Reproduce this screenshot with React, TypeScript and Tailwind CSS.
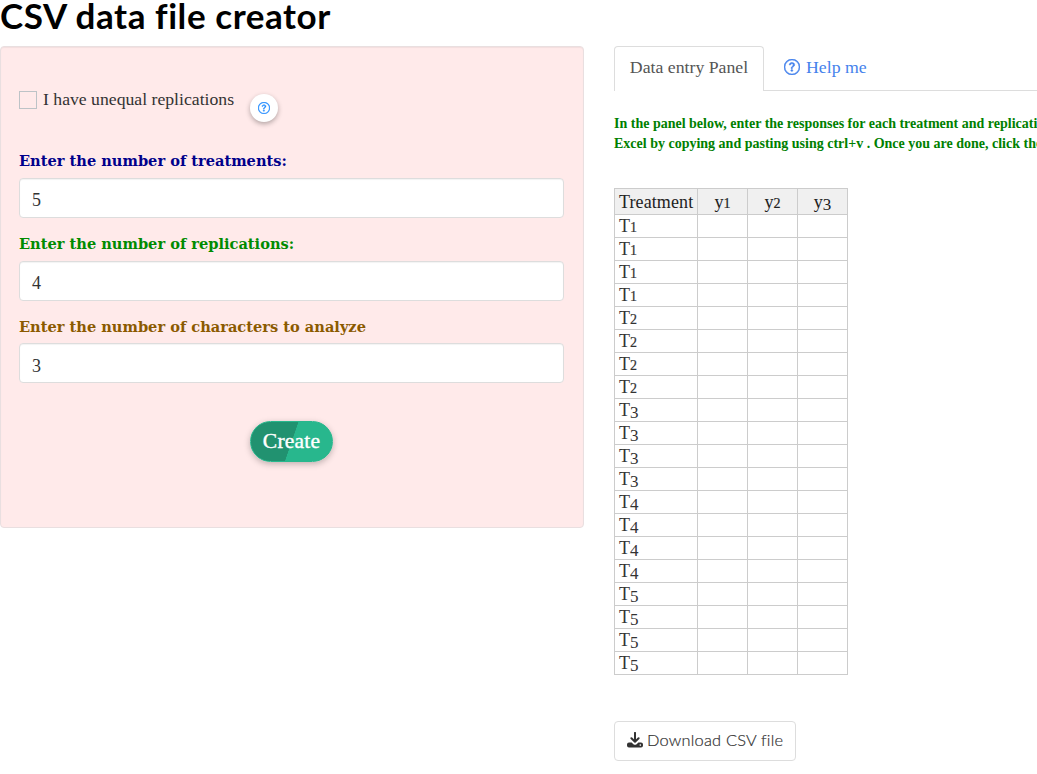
import { BsQuestionCircle } from "react-icons/bs";

const SERIF = "font-['Liberation_Serif',serif]";

const fields = [
  { label: "Enter the number of treatments:", value: "5", color: "text-[#00008b]", gap: "h-[28px]", pad: "pt-[4px]" },
  { label: "Enter the number of replications:", value: "4", color: "text-[#008b00]", gap: "h-[28px]", pad: "pt-[4px]" },
  { label: "Enter the number of characters to analyze", value: "3", color: "text-[#8b5a00]", gap: "h-[27px]", pad: "pt-[6px]" },
];

const treatments = ["T1", "T2", "T3", "T4", "T5"];
const rows = treatments.flatMap((t) => [t, t, t, t]);
const columns = ["y1", "y2", "y3"];

function DownloadIcon() {
  return (
    <svg viewBox="0 0 16 16" className="h-4 w-4 shrink-0" aria-hidden="true">
      <path d="M8 0.9V9.4M4.4 6.2L8 9.7L11.6 6.2" fill="none" stroke="#333" strokeWidth="2" strokeLinecap="round" strokeLinejoin="round" />
      <path d="M2 10.5H4.6L6.4 12.2Q8 13.5 9.6 12.2L11.4 10.5H14A2 2 0 0 1 16 12.5V13.5A2 2 0 0 1 14 15.5H2A2 2 0 0 1 0 13.5V12.5A2 2 0 0 1 2 10.5Z" fill="#333" />
      <circle cx="13.3" cy="13.1" r="0.8" fill="#fff" />
    </svg>
  );
}

// Old-style figures: 1 and 2 stay at x-height, 3 to 5 hang below the baseline.
function OldStyle({ text }: { text: string }) {
  const digit = text.slice(1);
  const low = Number(digit) >= 3;
  return (
    <>
      {text[0]}
      <span className={low ? "align-[-2px] text-[17px] leading-[0]" : "text-[14px] leading-[0] [-webkit-text-stroke:0.2px_currentColor]"}>
        {digit}
      </span>
    </>
  );
}

export default function App() {
  return (
    <div className={`${SERIF} h-[774px] w-[1037px] overflow-hidden bg-white text-[#333]`}>
      <h1 className="h-[46px] whitespace-nowrap font-['Lato',sans-serif] text-[35px] leading-[31px] font-bold tracking-[0.56px] text-black">
        CSV data file creator
      </h1>
      <div className="flex items-start gap-[30px]">
        <section className="h-[482px] w-[584px] shrink-0 rounded-[4px] border border-[#e9dfe0] bg-[#ffeaea] pt-[39px] pr-[19px] pl-[18px] shadow-[inset_0_1px_1px_rgba(0,0,0,0.05)]">
          <div className="flex h-[64px] items-start">
            <label className="flex h-[28px] items-center gap-[6px]">
              <span className="h-[18px] w-[18px] border border-[#bdc3c7]" />
              <span className="w-[192px] whitespace-nowrap pb-[2px] text-[17.7px] leading-6">I have unequal replications</span>
            </label>
            <button className="mt-[8px] ml-[15px] flex h-[28px] w-[28px] items-center justify-center rounded-full bg-white text-[#1d89ff] shadow-[0_2px_5px_rgba(0,0,0,0.3)]">
              <BsQuestionCircle size={12} className="[stroke-width:0.5] [stroke:currentColor]" />
            </button>
          </div>
          {fields.map((f) => (
            <div key={f.value} className="h-[83px]">
              <label className={`block whitespace-nowrap font-['DejaVu_Serif',serif] text-[14.6px] leading-[21px] font-bold ${f.color} ${f.gap}`}>
                {f.label}
              </label>
              <div className={`flex h-[40px] items-center rounded-[4px] border border-[#ddd] bg-white px-3 text-[18px] shadow-[inset_0_1px_1px_rgba(0,0,0,0.05)] ${f.pad}`}>
                {f.value}
              </div>
            </div>
          ))}
          <div className="flex justify-center pt-[22px]">
            <button className="h-[41px] w-[83px] rounded-full border border-[#28b78d] bg-[linear-gradient(109deg,#219270_50%,#28b78d_50.5%)] text-[21.5px] leading-[37px] font-medium tracking-[0.2px] text-white shadow-[0_2px_6px_rgba(0,0,0,0.25)] [-webkit-text-stroke:0.4px_white]">
              Create
            </button>
          </div>
        </section>
        <main className="w-[423px] shrink-0">
          <nav className="flex h-[45px] text-[17.75px]">
            <div className="flex w-[150px] items-center justify-center rounded-t-[4px] border border-b-0 border-[#ddd] pb-[4px] text-[#555]">
              Data entry Panel
            </div>
            <div className="flex flex-1 items-center gap-[6px] border-b border-[#ddd] pb-px pl-[20px] text-[#4582ec]">
              <BsQuestionCircle size={16} className="-mt-px [stroke-width:0.5] [stroke:currentColor]" />
              <span>Help me</span>
            </div>
          </nav>
          <p className="mt-[23px] h-[74px] whitespace-nowrap text-[14px] leading-5 font-bold text-[#008000]">
            In the panel below, enter the responses for each treatment and replication. You can also paste from
            <br />
            Excel by copying and pasting using ctrl+v . Once you are done, click the download button
          </p>
          <table className="w-[234px] table-fixed border-collapse text-[18px]">
            <colgroup>
              <col className="w-[83px]" />
              <col className="w-[50px]" />
              <col className="w-[50px]" />
              <col className="w-[50px]" />
            </colgroup>
            <thead>
              <tr className="h-[26px] bg-[#f0f0f0] text-[#222]">
                <th className="border border-[#ccc] px-1 py-0 text-left leading-[22px] font-normal whitespace-nowrap tracking-[0.1px]">Treatment</th>
                {columns.map((c) => (
                  <th key={c} className="border border-[#ccc] p-0 leading-[22px] font-normal">
                    <OldStyle text={c} />
                  </th>
                ))}
              </tr>
            </thead>
            <tbody>
              {rows.map((r, i) => (
                <tr key={i} className="h-[23px]">
                  <td className="border border-[#ccc] px-1 py-0 leading-[22px]">
                    <OldStyle text={r} />
                  </td>
                  {columns.map((c) => (
                    <td key={c} className="border border-[#ccc] p-0" />
                  ))}
                </tr>
              ))}
            </tbody>
          </table>
          <button className="mt-[46px] flex h-[40px] w-[182px] items-center gap-1 rounded-[4px] border border-[#ddd] bg-white pb-[2px] pl-3 font-['Lato',sans-serif] text-[16.4px] font-light tracking-[0.2px] whitespace-nowrap [-webkit-text-stroke:0.2px_currentColor]">
            <DownloadIcon />
            Download CSV file
          </button>
        </main>
      </div>
    </div>
  );
}
